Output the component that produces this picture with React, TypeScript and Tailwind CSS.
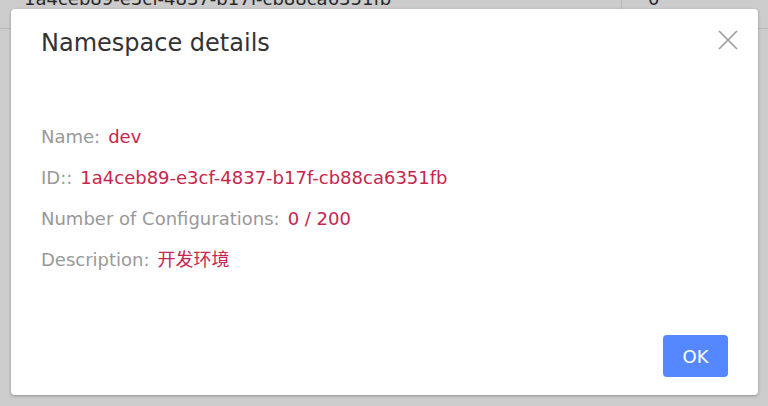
import React from "react";

export default function App() {
  const font = { fontFamily: '"DejaVu Sans", "Noto Sans CJK SC", sans-serif' };
  const Row = ({ label, value }: { label: string; value: string }) => (
    <div className="flex">
      <span className="text-[#999] mr-[8px]">{label}</span>
      <span className="text-[#c7254e]">{value}</span>
    </div>
  );
  return (
    <div className="relative w-[768px] h-[406px] overflow-hidden bg-white" style={font}>
      {/* underlying table */}
      <div className="mt-[-13px] flex h-[42px] border-b border-[#e6e6e6] text-[18px] leading-[24px] text-[#333]">
        <div className="w-[622px] border-r border-[#e6e6e6] pl-[24px]">
          1a4ceb89-e3cf-4837-b17f-cb88ca6351fb
        </div>
        <div className="pl-[26px]">0</div>
      </div>
      {/* overlay */}
      <div className="absolute inset-0 bg-black/20" />
      {/* dialog */}
      <div className="absolute left-[11px] top-[9px] w-[747px] h-[386px] bg-white rounded-[4px] shadow-[0_1px_3px_rgba(0,0,0,0.3)] flex flex-col">
        <div className="flex items-start justify-between pl-[30px] pr-[20px] pt-[18px]">
          <h2 className="text-[24px] text-[#333] leading-[32px]">Namespace details</h2>
          <button className="mt-[3px] w-[20px] h-[20px] flex items-center justify-center">
            <svg width="20" height="20" viewBox="0 0 20 20" fill="none" stroke="#999" strokeWidth="1.6">
              <path d="M1 1L19 19M19 1L1 19" />
            </svg>
          </button>
        </div>
        <div className="pl-[30px] pt-[66px] flex flex-col gap-[17px] text-[18px] leading-[24px]">
          <Row label="Name:" value="dev" />
          <Row label="ID::" value="1a4ceb89-e3cf-4837-b17f-cb88ca6351fb" />
          <Row label="Number of Configurations:" value="0 / 200" />
          <Row label="Description:" value="开发环境" />
        </div>
        <div className="mt-auto flex justify-end pr-[30px] pb-[18px]">
          <button className="w-[65px] h-[42px] rounded-[4px] bg-[#5588ff] text-white text-[18px]">OK</button>
        </div>
      </div>
    </div>
  );
}
